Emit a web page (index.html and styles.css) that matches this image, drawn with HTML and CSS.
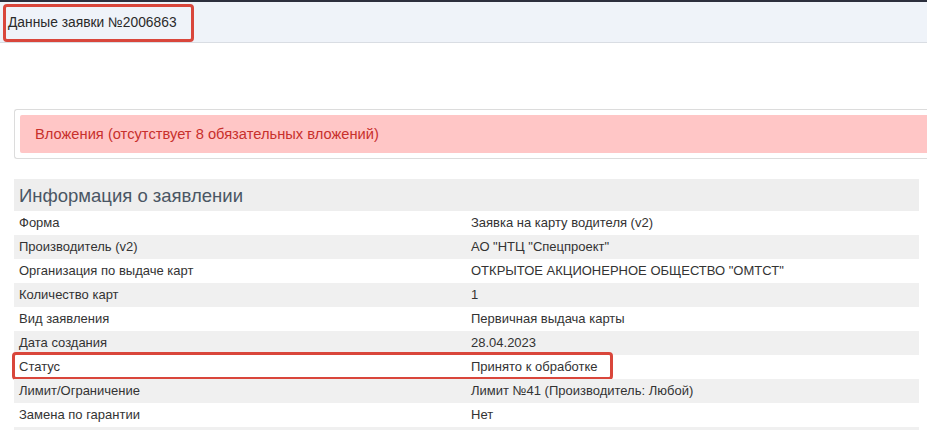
FILE: index.html
```html
<!DOCTYPE html>
<html lang="ru">
<head>
<meta charset="utf-8">
<link rel="stylesheet" href="styles.css">
</head>
<body>
<div class="topbar">
  <div class="title">Данные заявки №2006863</div>
  <span class="mark mark-title"></span>
</div>
<main class="content">
  <div class="alert-wrap">
    <div class="alert">Вложения (отсутствует 8 обязательных вложений)</div>
  </div>
  <section class="info">
    <h2 class="info-head">Информация о заявлении</h2>
    <div class="row"><div class="cell">Форма</div><div class="cell">Заявка на карту водителя (v2)</div></div>
    <div class="row"><div class="cell">Производитель (v2)</div><div class="cell">АО "НТЦ "Спецпроект"</div></div>
    <div class="row"><div class="cell">Организация по выдаче карт</div><div class="cell">ОТКРЫТОЕ АКЦИОНЕРНОЕ ОБЩЕСТВО "ОМТСТ"</div></div>
    <div class="row"><div class="cell">Количество карт</div><div class="cell">1</div></div>
    <div class="row"><div class="cell">Вид заявления</div><div class="cell">Первичная выдача карты</div></div>
    <div class="row"><div class="cell">Дата создания</div><div class="cell">28.04.2023</div></div>
    <div class="row row-marked"><div class="cell">Статус</div><div class="cell">Принято к обработке</div><span class="mark mark-row"></span></div>
    <div class="row"><div class="cell">Лимит/Ограничение</div><div class="cell">Лимит №41 (Производитель: Любой)</div></div>
    <div class="row"><div class="cell">Замена по гарантии</div><div class="cell">Нет</div></div>
    <div class="row"><div class="cell">&nbsp;</div><div class="cell">&nbsp;</div></div>
  </section>
</main>
</body>
</html>
```
FILE: styles.css
```css
* { box-sizing: border-box; }
html, body { margin: 0; padding: 0; }
body {
  width: 927px;
  height: 430px;
  overflow: hidden;
  background: #fff;
  font-family: "Liberation Sans", Arial, sans-serif;
  color: #333;
}
.topbar {
  position: relative;
  border-top: 2px solid #2c2f3d;
  background: #eff3f9;
  border-bottom: 1px solid #d9dde3;
  height: 43px;
  display: flex;
  align-items: center;
  padding-left: 8px;
}
.title {
  font-size: 13.8px;
  color: #2a2a2a;
  padding-top: 1px;
}
.mark {
  position: absolute;
  border: 3px solid #d9463b;
  border-radius: 4px;
  pointer-events: none;
}
.mark-title {
  left: 3px;
  top: 2px;
  width: 191px;
  height: 38px;
}
.content {
  padding: 66px 0 0 14px;
}
.alert-wrap {
  border: 1px solid #dcdcdc;
  border-right: none;
  border-radius: 3px 0 0 3px;
  padding: 5px 0 5px 5px;
  margin-right: -10px;
}
.alert {
  background: #ffc6c6;
  color: #c8302c;
  font-size: 14.7px;
  height: 38px;
  display: flex;
  align-items: center;
  padding-left: 15px;
  border-radius: 2px 0 0 2px;
}
.info {
  margin-top: 20px;
  width: 905px;
}
.info-head {
  margin: 0;
  background: #eeeeee;
  height: 32px;
  line-height: 33px;
  padding-left: 5px;
  font-weight: normal;
  font-size: 18.5px;
  color: #4a5664;
}
.row {
  position: relative;
  display: grid;
  grid-template-columns: 452px 1fr;
  height: 24px;
  font-size: 13px;
  line-height: 24px;
}
.row:nth-of-type(odd) { background: #fff; }
.row:nth-of-type(even) { background: #f0f0f0; }
.cell {
  padding-left: 5px;
  white-space: nowrap;
}
.mark-row {
  left: -2px;
  top: -3px;
  width: 601px;
  height: 28px;
}
```
